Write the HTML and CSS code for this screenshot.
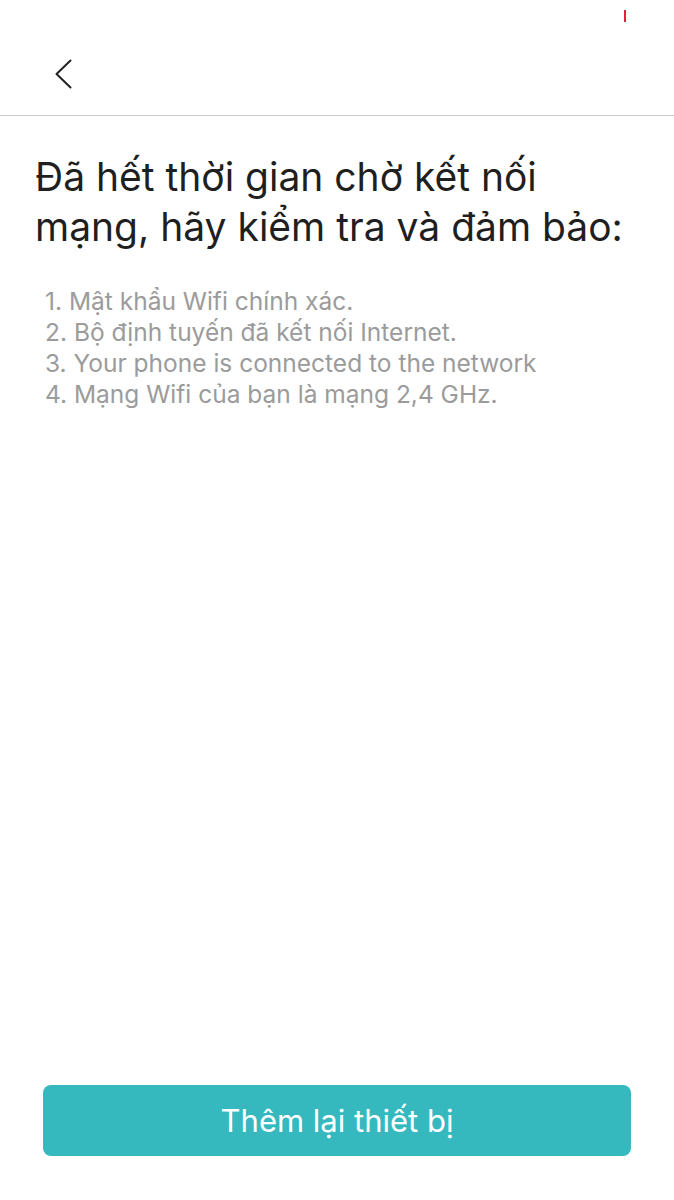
FILE: index.html
```html
<!DOCTYPE html>
<html lang="vi">
<head>
<meta charset="utf-8">
<title>Kết nối</title>
<link rel="stylesheet" href="styles.css">
</head>
<body>
<div class="screen">
  <div class="status"><span class="rec"></span></div>
  <header class="nav">
    <button class="back" aria-label="Quay lại">
      <svg width="20" height="30" viewBox="0 0 20 30"><path d="M18.5 1.5 L4.5 15 L18.5 28.5" fill="none" stroke="#222" stroke-width="2" stroke-linecap="round" stroke-linejoin="round"/></svg>
    </button>
  </header>
  <main class="content">
    <h1 class="title">Đã hết thời gian chờ kết nối mạng, hãy kiểm tra và đảm bảo:</h1>
    <ol class="tips">
      <li>1. Mật khẩu Wifi chính xác.</li>
      <li>2. Bộ định tuyến đã kết nối Internet.</li>
      <li>3. Your phone is connected to the network</li>
      <li>4. Mạng Wifi của bạn là mạng 2,4 GHz.</li>
    </ol>
  </main>
  <footer class="actions">
    <button class="primary">Thêm lại thiết bị</button>
  </footer>
</div>
</body>
</html>
```
FILE: styles.css
```css
* { box-sizing: border-box; }
html, body { margin: 0; padding: 0; background: #fff; }
body { font-family: Inter, "Liberation Sans", sans-serif; }
.screen { width: 674px; height: 1200px; display: flex; flex-direction: column; }
.status { height: 44px; display: flex; justify-content: flex-end; padding: 10px 48px 0 0; }
.rec { width: 2px; height: 12px; background: #e0253a; }
.nav { height: 72px; border-bottom: 1.5px solid #c9c9c9; display: flex; align-items: flex-start; padding: 15px 0 0 52px; }
.back { background: none; border: 0; padding: 0; width: 20px; height: 30px; cursor: pointer; }
.back svg { display: block; }
.content { flex: 1; padding: 36px 24px 0 35px; }
.title { margin: 0; font-size: 39px; font-weight: 400; line-height: 50px; color: #1f1f1f; letter-spacing: 0; }
.tips { list-style: none; margin: 34px 0 0 10px; padding: 0; color: #9b9b9b; font-size: 24.5px; line-height: 31px; }
.actions { padding: 0 43px 44px 43px; }
.primary { width: 100%; height: 71px; border: 0; border-radius: 8px; background: #35b9bf; color: #fff; font-family: inherit; font-size: 31px; font-weight: 400; }
```
